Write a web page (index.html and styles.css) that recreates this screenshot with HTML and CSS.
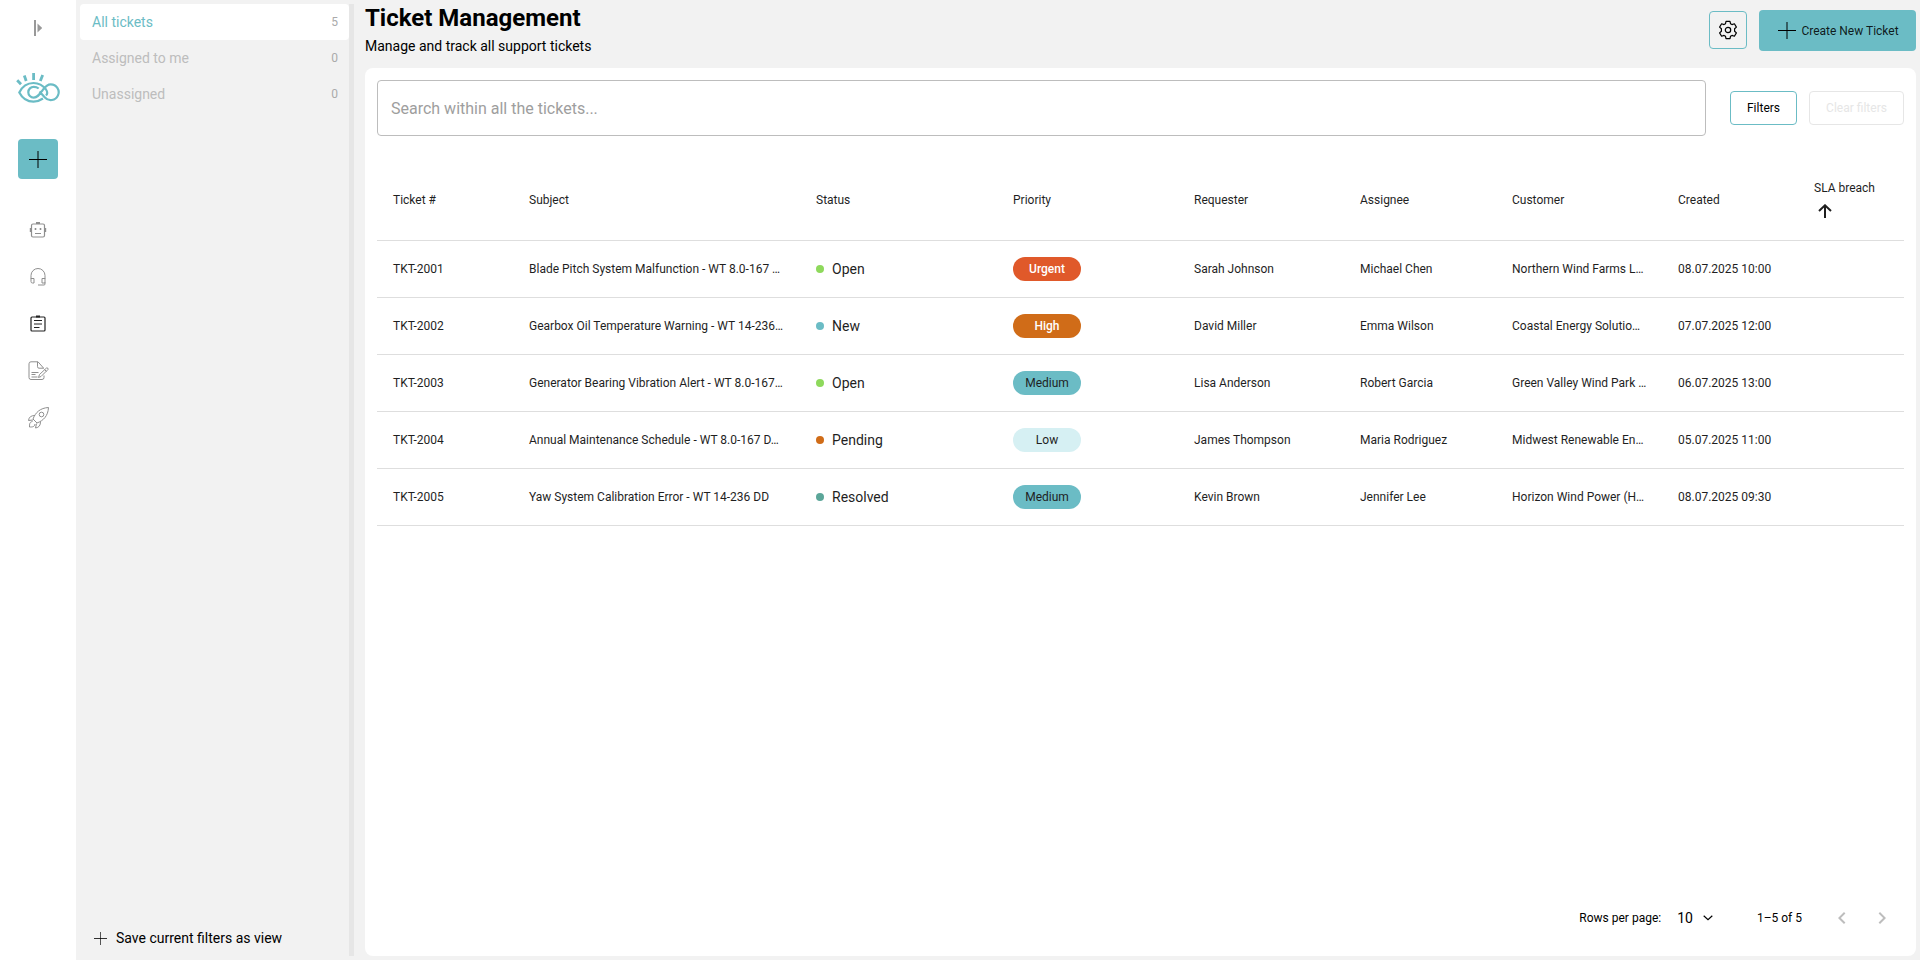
FILE: index.html
```html
<!DOCTYPE html>
<html lang="en">
<head>
    <meta charset="UTF-8">
    <meta name="viewport" content="width=device-width, initial-scale=1.0">
    <title>Ticket Management</title>
    <link rel="stylesheet" href="styles.css">
</head>
<body>

<nav class="sidebar">
    <svg class="toggle" width="8" height="16" viewBox="0 0 8 16"><path d="M0 0h2v16H0z"/><path d="M3.500 3.500 8.300 8l-4.800 4.500z"/></svg>
    <svg class="logo" width="44" height="32" viewBox="0 0 44 32" fill="none" stroke="#6bbcc5" stroke-width="2.200">
        <path d="M1.200 7.200 5 11.200M8.300 2.500l1.900 5.500M17.600 0v7M26.700 2l-2.400 6" stroke-width="2.800"/>
        <path d="M27 25.500c-3 2-6 3.200-9.500 3.200-6.500 0-11.500-4-14.200-9.200C6 14 11 10 17.500 10c5.500 0 9.500 2.500 12.500 6.500 1.700 2.500 1.500 4.500 0 6"/>
        <path d="M22.700 15.500c-1.700-1.400-3.400-1.700-5-1.700a5.400 5.400 0 1 0 0 10.800c4.300 0 6-3.600 9.300-8 2.500-3.400 4.500-5.300 7.700-5.300a7.900 7.900 0 1 1-5.800 13.200l-5.400-6"/>
    </svg>
    <button class="add-btn">
        <svg width="18" height="18" viewBox="0 0 18 18"><path d="M0 8h18v1H0z"/><path d="M8 0h2v17H8z" opacity=".5"/></svg>
    </button>
    <div class="nav-icons">
        <!-- bot -->
        <svg width="24" height="24" viewBox="0 0 24 24"><rect x="5.500" y="6" width="13" height="13" rx="1.500" stroke-width="1.200"/><path d="M10 5h4M4.700 10v4M19.300 10v4" stroke-width="1.800"/><path d="M8.700 11h1.600M13.700 11h1.600" stroke-width="1.800"/><path d="M9 15.500h6"/></svg>
        <!-- headset -->
        <svg width="24" height="24" viewBox="0 0 24 24"><path d="M5 14v-3.500a7 7 0 0 1 14 0V14M5 13.500h3v4.500H6.500A1.500 1.500 0 0 1 5 16.500zM19 13.500h-3V18h3zM19 17.500V19q0 1-1 1h-6"/></svg>
        <!-- tickets -->
        <svg class="active" width="24" height="24" viewBox="0 0 24 24"><rect x="5" y="5" width="14" height="14" rx="1" stroke-width="1.200"/><path d="M10 4.500h4" stroke-width="2"/><path d="M8 8.500h8M8 12h8M8 15.500h5.500" stroke-width="1.200"/></svg>
        <!-- document -->
        <svg width="24" height="24" viewBox="0 0 24 24"><path d="M17.500 9.500v-.5L12 2.800H5q-2 0-2 2V18.500q0 2 2 2h11q2 0 2-2v-2M11.500 3v4.700q0 1.500 1.500 1.500h4.500M5.500 13.500h7M5.500 15.500h4M5.500 18h6M12.500 18.500l1-3 7-6.500q2-.5 1.500 1.500L15 17.500zM18.500 10.500l2 2"/></svg>
        <!-- rocket -->
        <svg width="24" height="24" viewBox="0 0 24 24"><path d="M7 13C9.500 6.500 14 2 22.500 1.500c-.5 8.500-5 13-11.500 15.500zM9 9.500c-4 0-6 1.500-6.500 5l4.500-.5M14.500 15.500c0 4-1.500 6-5 6.500l1-4.500M6.500 15.500c-3 .5-3 2.500-3 5.500 3 0 5 0 5.500-3"/><circle cx="15.500" cy="8.500" r="2.300"/></svg>
    </div>
</nav>

<aside class="views">
    <ul class="view-list">
        <li class="selected">All tickets <span>5</span></li>
        <li>Assigned to me <span>0</span></li>
        <li>Unassigned <span>0</span></li>
    </ul>
    <button class="save-view">
        <svg width="13" height="13" viewBox="0 0 13 13"><path d="M0 6h13v1H0z" opacity=".8"/><path d="M6 0h1v13H6z" opacity=".65"/></svg>
        Save current filters as view
    </button>
</aside>

<main class="content">
    <header class="page-header">
        <div>
            <h1>Ticket Management</h1>
            <p>Manage and track all support tickets</p>
        </div>
        <div class="header-actions">
            <button class="settings-btn">
                <svg width="20" height="20" viewBox="0 0 20 20" fill="none" stroke="#000" stroke-width="1.200" stroke-linejoin="round"><path d="M8 1.300h4l.5 2.400 1.500.9 2.400-.8 2 3.300L16.600 8.800v2.400l1.800 1.700-2 3.300-2.400-.8-1.500.9-.5 2.400H8l-.5-2.400-1.500-.9-2.400.8-2-3.300 1.800-1.700V8.800L1.600 7.100l2-3.300 2.400.8 1.500-.9z"/><circle cx="10" cy="10" r="2.700"/></svg>
            </button>
            <button class="create-btn">
                <svg width="18" height="18" viewBox="0 0 18 18"><path d="M0 8h18v1H0z"/><path d="M8 0h2v17H8z" opacity=".5"/></svg>
                Create New Ticket
            </button>
        </div>
    </header>

    <section class="card">
        <div class="toolbar">
            <input class="search" type="text" placeholder="Search within all the tickets...">
            <button class="filter-btn">Filters</button>
            <button class="filter-btn clear" disabled>Clear filters</button>
        </div>

        <table class="tickets">
            <colgroup>
                <col class="c-id"><col class="c-subject"><col class="c-status"><col class="c-priority"><col class="c-requester"><col class="c-assignee"><col class="c-customer"><col class="c-created"><col class="c-sla">
            </colgroup>
            <thead>
                <tr>
                    <th>Ticket #</th>
                    <th>Subject</th>
                    <th>Status</th>
                    <th>Priority</th>
                    <th>Requester</th>
                    <th>Assignee</th>
                    <th>Customer</th>
                    <th>Created</th>
                    <th>
                        <span class="sort">SLA breach
                            <svg width="14" height="14" viewBox="0 0 14 14"><path d="M7 14V1.500M1 7l6-5.700L13 7"/></svg>
                        </span>
                    </th>
                </tr>
            </thead>
            <tbody>
                <tr>
                    <td>TKT-2001</td>
                    <td>Blade Pitch System Malfunction - WT 8.0-167 …</td>
                    <td><span class="status open">Open</span></td>
                    <td><span class="chip urgent">Urgent</span></td>
                    <td>Sarah Johnson</td>
                    <td>Michael Chen</td>
                    <td>Northern Wind Farms L…</td>
                    <td>08.07.2025 10:00</td>
                    <td></td>
                </tr>
                <tr>
                    <td>TKT-2002</td>
                    <td>Gearbox Oil Temperature Warning - WT 14-236…</td>
                    <td><span class="status new">New</span></td>
                    <td><span class="chip high">High</span></td>
                    <td>David Miller</td>
                    <td>Emma Wilson</td>
                    <td>Coastal Energy Solutio…</td>
                    <td>07.07.2025 12:00</td>
                    <td></td>
                </tr>
                <tr>
                    <td>TKT-2003</td>
                    <td>Generator Bearing Vibration Alert - WT 8.0-167…</td>
                    <td><span class="status open">Open</span></td>
                    <td><span class="chip medium">Medium</span></td>
                    <td>Lisa Anderson</td>
                    <td>Robert Garcia</td>
                    <td>Green Valley Wind Park …</td>
                    <td>06.07.2025 13:00</td>
                    <td></td>
                </tr>
                <tr>
                    <td>TKT-2004</td>
                    <td>Annual Maintenance Schedule - WT 8.0-167 D…</td>
                    <td><span class="status pending">Pending</span></td>
                    <td><span class="chip low">Low</span></td>
                    <td>James Thompson</td>
                    <td>Maria Rodriguez</td>
                    <td>Midwest Renewable En…</td>
                    <td>05.07.2025 11:00</td>
                    <td></td>
                </tr>
                <tr>
                    <td>TKT-2005</td>
                    <td>Yaw System Calibration Error - WT 14-236 DD</td>
                    <td><span class="status resolved">Resolved</span></td>
                    <td><span class="chip medium">Medium</span></td>
                    <td>Kevin Brown</td>
                    <td>Jennifer Lee</td>
                    <td>Horizon Wind Power (H…</td>
                    <td>08.07.2025 09:30</td>
                    <td></td>
                </tr>
            </tbody>
        </table>

        <footer class="pagination">
            <span class="rows-label">Rows per page:</span>
            <span class="rows-value">10</span>
            <svg class="caret" width="10" height="6" viewBox="0 0 10 6" fill="none" stroke="#000" stroke-width="1.200"><path d="M.7.800 5 4.700 9.300.800"/></svg>
            <span class="range">1–5 of 5</span>
            <svg class="prev" width="24" height="24" viewBox="0 0 24 24"><path d="M15.410 7.410 14 6l-6 6 6 6 1.410-1.410L10.830 12z"/></svg>
            <svg class="next" width="24" height="24" viewBox="0 0 24 24"><path d="M10 6 8.590 7.410 13.170 12l-4.580 4.590L10 18l6-6z"/></svg>
        </footer>
    </section>
</main>

</body>
</html>
```
FILE: styles.css
```css
* {
    box-sizing: border-box;
}

body {
    margin: 0;
    height: 100vh;
    display: flex;
    overflow: hidden;
    background-color: #f2f2f2;
    font-family: Roboto, sans-serif;
    font-size: 12px;
    color: #000;
}

button {
    font-family: inherit;
    font-size: 12px;
    padding: 0;
    border: none;
    border-radius: 4px;
    background: none;
    color: #000;
    cursor: pointer;
}

svg {
    display: block;
    flex-shrink: 0;
}

/* left icon bar */
.sidebar {
    width: 76px;
    background-color: #fff;
    display: flex;
    flex-direction: column;
    align-items: center;
    padding-top: 20px;
}

.toggle {
    fill: #999;
}

.logo {
    margin-top: 37px;
}

.add-btn {
    width: 40px;
    height: 40px;
    margin-top: 34px;
    padding-top: 2px;
    background-color: #6bbcc5;
    display: flex;
    justify-content: center;
    align-items: center;
}

.nav-icons {
    margin-top: 39px;
    display: flex;
    flex-direction: column;
    gap: 23px;
}

.nav-icons svg {
    fill: none;
    stroke: #8f8f8f;
    stroke-width: 1;
}

.nav-icons .active {
    stroke: #222;
}

/* saved views */
.views {
    width: 278px;
    margin: 4px 0;
    padding-left: 4px;
    border-right: 5px solid #e6e6e6;
    display: flex;
    flex-direction: column;
    justify-content: space-between;
}

.view-list {
    list-style: none;
    margin: 0;
    padding: 0;
}

.view-list li {
    height: 36px;
    padding: 0 11px 0 12px;
    display: flex;
    justify-content: space-between;
    align-items: center;
    font-size: 14px;
    color: #bdbdbd;
    border-radius: 4px;
}

.view-list span {
    font-size: 12px;
    color: #aaa;
}

.view-list .selected {
    background-color: #fff;
    color: #6bbcc5;
}

.save-view {
    display: flex;
    align-items: center;
    gap: 9px;
    height: 36px;
    padding-left: 14px;
    font-size: 14px;
}

/* main area */
.content {
    flex: 1;
    padding: 0 4px 4px 11px;
    display: flex;
    flex-direction: column;
}

.page-header {
    height: 68px;
    display: flex;
    justify-content: space-between;
}

h1 {
    margin: 4px 0 0;
    font-size: 24px;
    line-height: 28px;
    font-weight: 700;
}

.page-header p {
    margin: 4px 0 0;
    font-size: 14px;
    line-height: 20px;
}

.header-actions {
    display: flex;
    gap: 12px;
    padding-top: 10px;
}

.settings-btn {
    width: 38px;
    height: 38px;
    margin-top: 1px;
    border: 1px solid #6bbcc5;
    display: flex;
    justify-content: center;
    align-items: center;
}

.create-btn {
    width: 157px;
    height: 41px;
    padding-left: 2px;
    background-color: #6bbcc5;
    color: rgba(0, 0, 0, 0.87);
    display: flex;
    justify-content: center;
    align-items: center;
    gap: 5px;
}

.card {
    flex: 1;
    background-color: #fff;
    border-radius: 8px;
    padding: 12px;
    display: flex;
    flex-direction: column;
}

.toolbar {
    display: flex;
    align-items: center;
    gap: 12px;
}

.search {
    flex: 1;
    height: 56px;
    margin-right: 12px;
    padding: 0 13px;
    border: 1px solid #bdbdbd;
    border-radius: 4px;
    font-family: inherit;
    font-size: 16px;
}

.search::placeholder {
    color: #9e9e9e;
}

.filter-btn {
    width: 67px;
    height: 34px;
    border: 1px solid #6bbcc5;
}

.filter-btn.clear {
    width: 95px;
    border-color: #e6e6e6;
    color: #e6e6e6;
}

/* tickets table */
.tickets {
    margin-top: 24px;
    width: 1527px;
    table-layout: fixed;
    border-collapse: separate;
    border-spacing: 0;
    color: #1f1f1f;
}

.c-id { width: 136px; }
.c-subject { width: 287px; }
.c-status { width: 197px; }
.c-priority { width: 181px; }
.c-requester { width: 166px; }
.c-assignee { width: 152px; }
.c-customer { width: 166px; }
.c-created { width: 136px; }
.c-sla { width: 106px; }

.tickets th,
.tickets td {
    padding: 0 16px;
    text-align: left;
    font-weight: 400;
    white-space: nowrap;
    border-bottom: 1px solid #dedede;
}

.tickets th {
    height: 81px;
}

.tickets td {
    height: 57px;
}

.sort {
    display: block;
    line-height: 24px;
}

.sort svg {
    margin: 4px 0 6px 4px;
    fill: none;
    stroke: #1f1f1f;
    stroke-width: 2;
}

.status {
    display: flex;
    align-items: center;
    gap: 8px;
    font-size: 14px;
}

.status::before {
    content: "";
    width: 8px;
    height: 8px;
    border-radius: 50%;
}

.open::before { background-color: #8ed95c; }
.new::before { background-color: #6bbcc5; }
.pending::before { background-color: #d06c18; }
.resolved::before { background-color: #5ba699; }

.chip {
    display: block;
    width: 68px;
    line-height: 24px;
    border-radius: 12px;
    text-align: center;
}

.urgent {
    background-color: #e0592a;
    color: #fff;
    font-weight: 500;
}

.high {
    background-color: #d06c18;
    color: #fff;
    font-weight: 500;
}

.medium { background-color: #6bbcc5; }
.low { background-color: #d6f0f3; }

/* pagination */
.pagination {
    height: 52px;
    margin-top: auto;
    display: flex;
    justify-content: flex-end;
    align-items: center;
}

.rows-value {
    margin-left: 16px;
    font-size: 14px;
}

.caret {
    margin-left: 10px;
}

.range {
    margin-left: 44px;
}

.pagination .prev,
.pagination .next {
    fill: #bdbdbd;
}

.prev {
    margin-left: 28px;
}

.next {
    margin: 0 10px 0 16px;
}
```
